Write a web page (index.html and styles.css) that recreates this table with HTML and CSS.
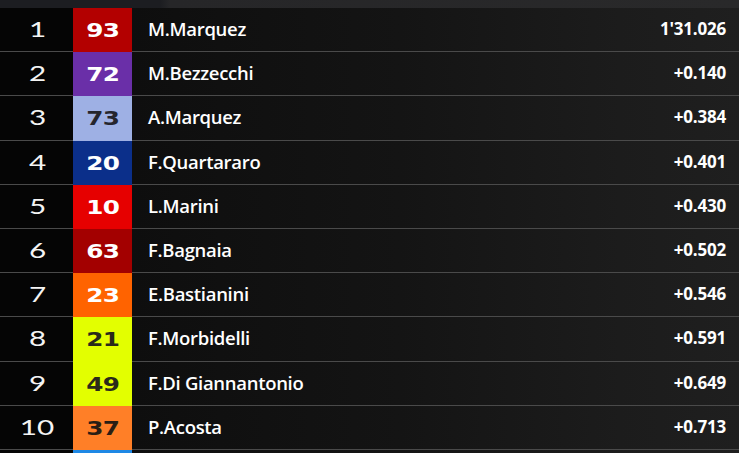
FILE: index.html
```html
<!DOCTYPE html>
<html>
<head>
<meta charset="utf-8">
<link rel="stylesheet" href="styles.css">
</head>
<body>
<div class="board">
  <div class="topbar"></div>
  <div class="row"><div class="pos"><span>1</span></div><div class="num c93"><span>93</span></div><div class="name">M.Marquez</div><div class="gap">1'31.026</div></div>
  <div class="row"><div class="pos"><span>2</span></div><div class="num c72"><span>72</span></div><div class="name">M.Bezzecchi</div><div class="gap">+0.140</div></div>
  <div class="row"><div class="pos"><span>3</span></div><div class="num c73"><span>73</span></div><div class="name">A.Marquez</div><div class="gap">+0.384</div></div>
  <div class="row"><div class="pos"><span>4</span></div><div class="num c20"><span>20</span></div><div class="name">F.Quartararo</div><div class="gap">+0.401</div></div>
  <div class="row"><div class="pos"><span>5</span></div><div class="num c10"><span>10</span></div><div class="name">L.Marini</div><div class="gap">+0.430</div></div>
  <div class="row"><div class="pos"><span>6</span></div><div class="num c63"><span>63</span></div><div class="name">F.Bagnaia</div><div class="gap">+0.502</div></div>
  <div class="row"><div class="pos"><span>7</span></div><div class="num c23"><span>23</span></div><div class="name">E.Bastianini</div><div class="gap">+0.546</div></div>
  <div class="row"><div class="pos"><span>8</span></div><div class="num c21"><span>21</span></div><div class="name">F.Morbidelli</div><div class="gap">+0.591</div></div>
  <div class="row"><div class="pos"><span>9</span></div><div class="num c49"><span>49</span></div><div class="name">F.Di Giannantonio</div><div class="gap">+0.649</div></div>
  <div class="row"><div class="pos"><span>10</span></div><div class="num c37"><span>37</span></div><div class="name">P.Acosta</div><div class="gap">+0.713</div></div>
  <div class="row"><div class="pos"></div><div class="num cnext"></div><div class="name"></div><div class="gap"></div></div>
</div>
</body>
</html>
```
FILE: styles.css
```css
html, body {
  margin: 0;
  padding: 0;
  background: #050505;
  overflow: hidden;
}
.board {
  width: 739px;
  height: 453px;
  overflow: hidden;
  font-family: "Open Sans", "Liberation Sans", sans-serif;
  background: linear-gradient(90deg, #050505 0, #050505 73px, #0e0e0e 132px, #141414 400px, #1c1c1c 620px, #1f1f1f 739px);
}
.topbar {
  height: 8px;
  background: linear-gradient(90deg, #1c1d21 0, #1c1d21 160px, #262628 170px, #29292a 739px);
}
.row {
  display: grid;
  grid-template-columns: 73px 59px 1fr 150px;
  height: 44.2px;
}
.pos, .name, .gap {
  border-bottom: 1px solid #4a4a4a;
  display: flex;
  align-items: center;
  color: #fff;
  padding-bottom: 2px;
}
.pos {
  justify-content: center;
  font-family: "Lato", "DejaVu Sans", sans-serif;
  font-weight: 400;
  font-size: 22px;
  color: #f4f4f4;
}
.pos span {
  display: inline-block;
  transform: scaleX(1.35);
  padding-left: 1px;
}
.num {
  display: flex;
  align-items: center;
  justify-content: center;
  font-family: "DejaVu Sans", sans-serif;
  font-weight: 700;
  font-size: 19px;
  color: #fff;
}
.num span {
  display: inline-block;
  transform: scaleX(1.3);
  letter-spacing: -0.5px;
}
.name {
  padding-left: 16px;
  font-size: 18.5px;
  font-weight: 600;
  letter-spacing: -0.3px;
}
.gap {
  justify-content: flex-end;
  padding-right: 13px;
  font-size: 17px;
  font-weight: 700;
  letter-spacing: -0.2px;
}
.c93 { background: #b30000; }
.c72 { background: #6a2fa8; }
.c73 { background: #9eb0e4; color: #25252d; }
.c20 { background: #0b2f8a; }
.c10 { background: #e60000; }
.c63 { background: #a30000; }
.c23 { background: #ff6300; }
.c21 { background: #e3ff00; color: #2a2a1a; }
.c49 { background: #e3ff00; color: #2a2a1a; }
.c37 { background: #ff7f27; color: #2a1e14; }
.cnext { background: #1e88e5; }
```
